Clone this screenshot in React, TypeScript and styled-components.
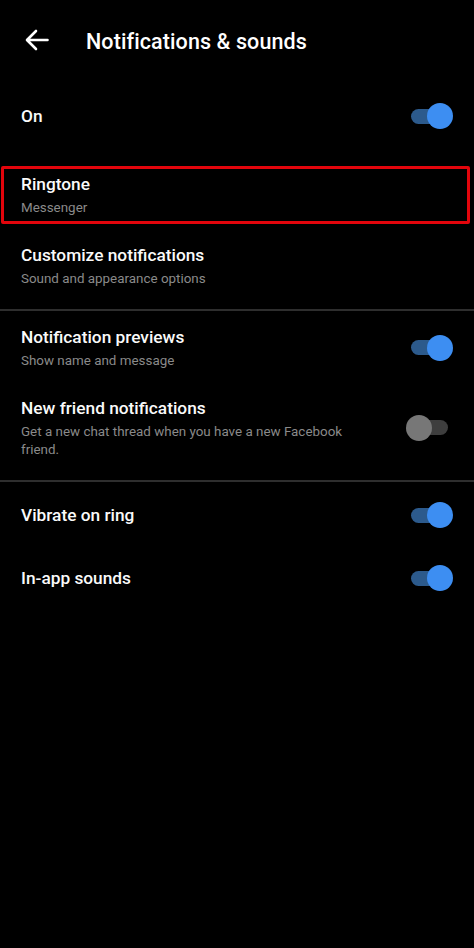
import React from "react";
import styled, { createGlobalStyle } from "styled-components";

const GlobalStyle = createGlobalStyle`
  html, body {
    margin: 0;
    padding: 0;
    background: #000;
  }
  body {
    font-family: Roboto, "Noto Sans", "Liberation Sans", sans-serif;
    color: #fff;
  }
`;

type Item = {
  title: string;
  sub?: string;
  toggle?: "on" | "off";
};

const App: React.FC = () => {
  return (
    <Screen>
      <GlobalStyle />
      <Header>
        <BackButton aria-label="Back">
          <svg width="24" height="22" viewBox="0 0 24 22" fill="none">
            <path
              d="M22.5 11H2.5M11 2L2 11l9 9"
              stroke="#fff"
              strokeWidth="2.6"
              strokeLinecap="round"
              strokeLinejoin="round"
            />
          </svg>
        </BackButton>
        <HeaderTitle>Notifications &amp; sounds</HeaderTitle>
      </Header>

      <SingleRow $pad="21px 21px 37px">
        <Title>On</Title>
        <Toggle on />
      </SingleRow>

      <Highlight>
        <TextBlock>
          <Title>Ringtone</Title>
          <Sub>Messenger</Sub>
        </TextBlock>
      </Highlight>

      <Section $pad="19px 21px 21px">
        <TextBlock>
          <Title>Customize notifications</Title>
          <Sub>Sound and appearance options</Sub>
        </TextBlock>
      </Section>

      <Divider />

      <Section $pad="14px 21px 21px" $gap="26px">
        {previewItems.map((item) => (
          <Row key={item.title}>
            <TextBlock>
              <Title>{item.title}</Title>
              {item.sub && <Sub>{item.sub}</Sub>}
            </TextBlock>
            {item.toggle && <Toggle on={item.toggle === "on"} />}
          </Row>
        ))}
      </Section>

      <Divider />

      <Section $pad="20px 21px" $gap="37px">
        {soundItems.map((item) => (
          <Row key={item.title}>
            <Title>{item.title}</Title>
            <Toggle on={item.toggle === "on"} />
          </Row>
        ))}
      </Section>
    </Screen>
  );
};

export default App;

const previewItems: Item[] = [
  { title: "Notification previews", sub: "Show name and message", toggle: "on" },
  {
    title: "New friend notifications",
    sub: "Get a new chat thread when you have a new Facebook friend.",
    toggle: "off",
  },
];

const soundItems: Item[] = [
  { title: "Vibrate on ring", toggle: "on" },
  { title: "In-app sounds", toggle: "on" },
];

const Toggle: React.FC<{ on?: boolean }> = ({ on }) => (
  <Switch $on={!!on}>
    <Track $on={!!on} />
    <Knob $on={!!on} />
  </Switch>
);

const Screen = styled.div`
  width: 474px;
  min-height: 948px;
  background: #000;
  display: flex;
  flex-direction: column;
`;

const Header = styled.div`
  height: 82px;
  display: flex;
  align-items: center;
  padding: 0 0 0 25px;
  gap: 37px;
`;

const BackButton = styled.button`
  background: none;
  border: none;
  padding: 0;
  margin-top: -2px;
  display: flex;
  align-items: center;
  cursor: pointer;
`;

const HeaderTitle = styled.h1`
  margin: 0;
  font-size: 21.5px;
  font-weight: 500;
  letter-spacing: 0.1px;
  color: #fff;
`;

const SingleRow = styled.div<{ $pad: string }>`
  display: flex;
  align-items: center;
  justify-content: space-between;
  padding: ${(p) => p.$pad};
`;

const Highlight = styled.div`
  margin: 0 4px 0 1px;
  border: 3px solid #e3050c;
  border-radius: 2px;
  padding: 3px 17px 4px;
`;

const Section = styled.div<{ $pad: string; $gap?: string }>`
  display: flex;
  flex-direction: column;
  gap: ${(p) => p.$gap || "0"};
  padding: ${(p) => p.$pad};
`;

const Row = styled.div`
  display: flex;
  align-items: center;
  justify-content: space-between;
  gap: 40px;
`;

const TextBlock = styled.div`
  display: flex;
  flex-direction: column;
  max-width: 345px;
`;

const Title = styled.div`
  font-size: 17.3px;
  font-weight: 500;
  line-height: 24px;
  color: #fafafa;
`;

const Sub = styled.div`
  margin-top: 3px;
  font-size: 13.4px;
  line-height: 18px;
  color: #8a8a8a;
`;

const Divider = styled.div`
  height: 2px;
  background: #2e2e2e;
`;

const Switch = styled.div<{ $on: boolean }>`
  position: relative;
  flex-shrink: 0;
  width: 42px;
  height: 26px;
  margin-right: ${(p) => (p.$on ? "0" : "5px")};
`;

const Track = styled.div<{ $on: boolean }>`
  position: absolute;
  top: 5.5px;
  height: 15px;
  left: ${(p) => (p.$on ? "0" : "12px")};
  right: ${(p) => (p.$on ? "6px" : "0")};
  border-radius: 8px;
  background: ${(p) => (p.$on ? "#2c5a8c" : "#3e3e3e")};
`;

const Knob = styled.div<{ $on: boolean }>`
  position: absolute;
  top: 0;
  left: ${(p) => (p.$on ? "16px" : "0")};
  width: 26px;
  height: 26px;
  border-radius: 50%;
  background: ${(p) => (p.$on ? "#3d8ef2" : "#777")};
`;
